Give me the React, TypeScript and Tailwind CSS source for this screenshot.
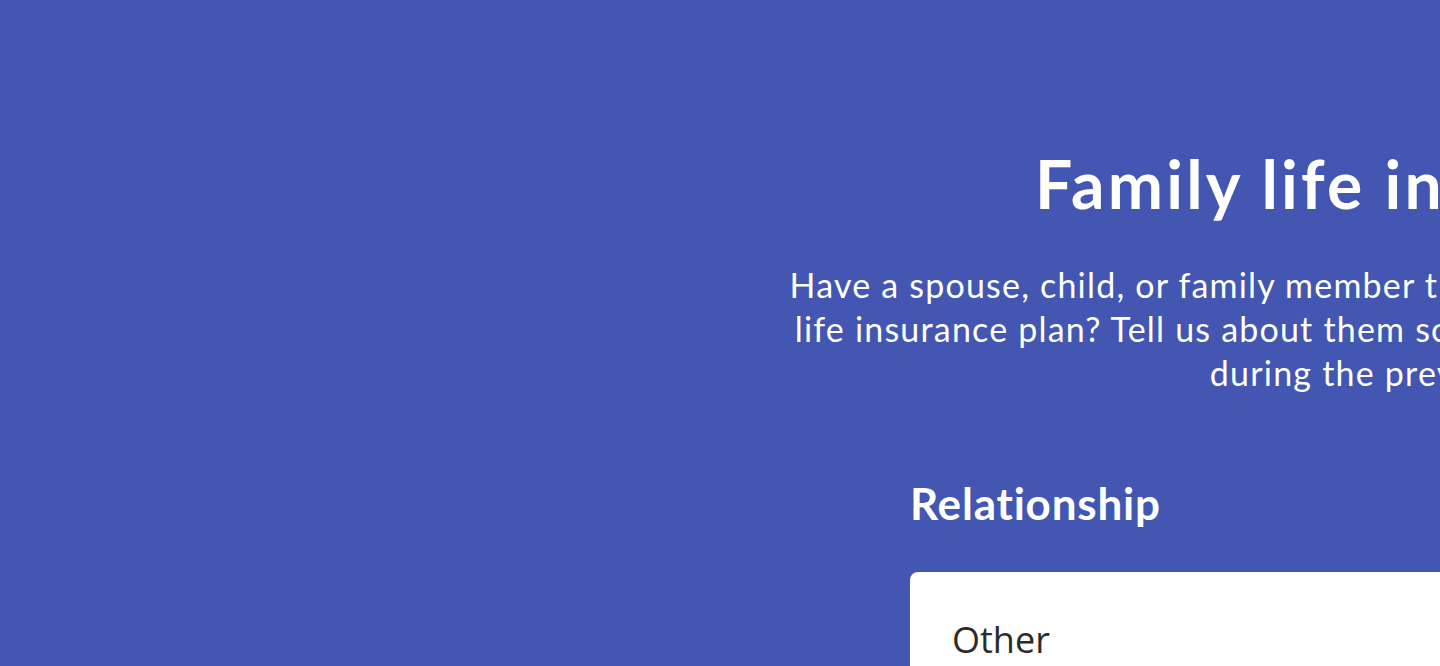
import React from "react";

export default function App() {
  return (
    <div className="h-[666px] w-full overflow-hidden bg-[#4256b2]">
      <div className="flex w-[2730px] flex-col items-center pt-[144px] font-['Lato',sans-serif] text-white">
        <h1 className="text-[66px] font-bold leading-[1.2] tracking-[3.2px] whitespace-nowrap">
          Family life insurance
        </h1>
        <p className="mt-[40px] text-center text-[34px] leading-[44px] tracking-[1.2px] whitespace-nowrap">
          Have a spouse, child, or family member that you'd like to include in your
          <br />
          life insurance plan? Tell us about them so we can support you and them
          <br />
          during the preview.
        </p>
        <div className="mt-[82px] flex w-[910px] flex-col">
          <label className="text-[44px] font-bold leading-[1.2] tracking-[0.8px]">Relationship</label>
          <div className="mt-[42px] h-[200px] rounded-lg bg-white px-[42px] pt-[41px]">
            <span className="font-['Open_Sans',sans-serif] text-[36px] text-[#2b2b2b]">Other</span>
          </div>
        </div>
      </div>
    </div>
  );
}
